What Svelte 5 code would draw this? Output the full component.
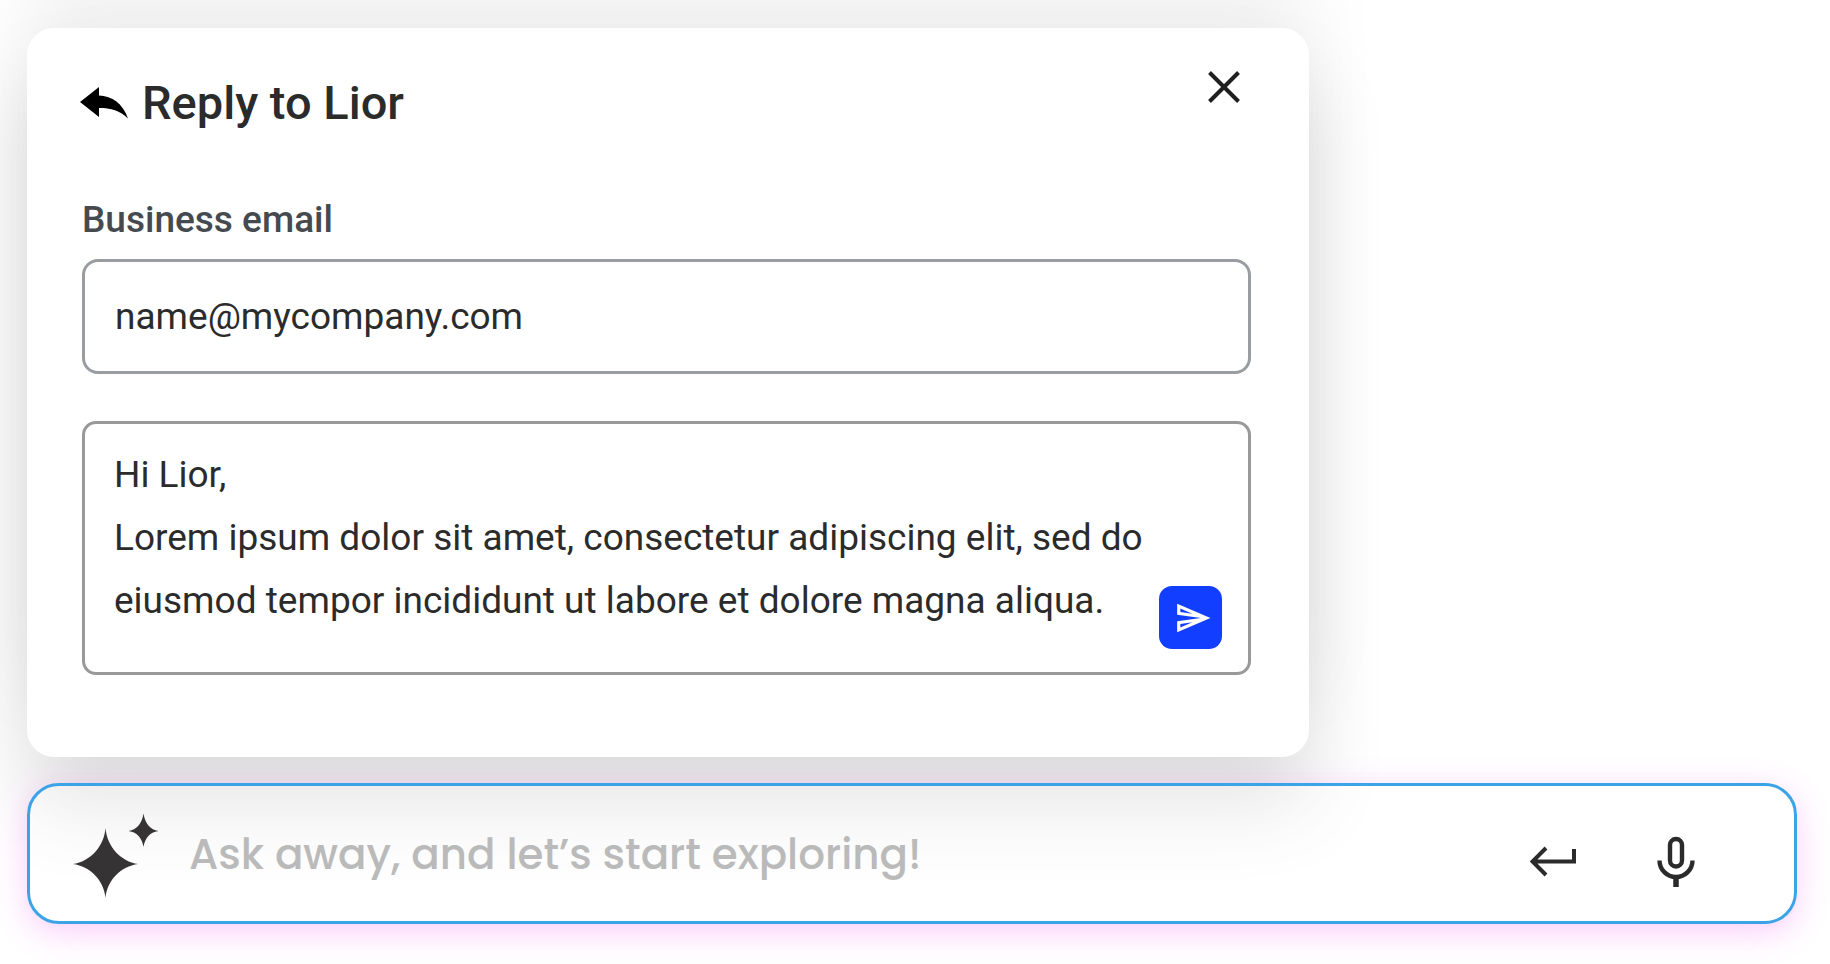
<script>
  let open = $state(true);
  let email = $state('name@mycompany.com');
  let message = $state(
    'Hi Lior,\nLorem ipsum dolor sit amet, consectetur adipiscing elit, sed do eiusmod tempor incididunt ut labore et dolore magna aliqua.'
  );
  let prompt = $state('');

  function send(e) {
    e.preventDefault();
    message = '';
  }

  function ask(e) {
    e.preventDefault();
    prompt = '';
  }
</script>

<main class="page">
  {#if open}
    <form class="reply" onsubmit={send}>
      <header class="reply-header">
        <svg class="reply-icon" viewBox="2 0 46 32" aria-hidden="true">
          <path d="M0 15 L19 0 V8.500 C32 9 43 16.500 48 31.500 C40 23.500 31 21 19 21 V30 Z" />
        </svg>
        <h1>Reply to Lior</h1>
        <button type="button" class="close" aria-label="Close" onclick={() => (open = false)}>
          <svg viewBox="0 0 32 32" aria-hidden="true">
            <path d="M1.500 1.500 L30.500 30.500 M30.500 1.500 L1.500 30.500" />
          </svg>
        </button>
      </header>

      <label for="email">Business email</label>
      <input id="email" type="email" bind:value={email} />

      <div class="message">
        <textarea rows="3" aria-label="Message" bind:value={message}></textarea>
        <button type="submit" class="send" aria-label="Send">
          <svg viewBox="0 0 24 24" aria-hidden="true">
            <path
              d="M4.010 6.030l7.510 3.220-7.520-1 .01-2.220m7.500 8.720L4 17.970v-2.220l7.510-1M2.010 3L2 10l15 2-15 2 .01 7L23 12 2.010 3z"
            />
          </svg>
        </button>
      </div>
    </form>
  {/if}

  <form class="ask" onsubmit={ask}>
    <svg class="sparkles" viewBox="0 0 92 88" aria-hidden="true">
      <path d="M36.500 16 C38 35 52 49.500 69 52 C52 54.500 38 68 36.500 86 C35 68 21 54.500 4 52 C21 49.500 35 35 36.500 16 Z" />
      <path d="M74.500 1.500 C76 11 80.500 17.500 89.500 19 C80.500 20.500 76 26 74.500 35 C73 26 68.500 20.500 59.500 19 C68.500 17.500 73 11 74.500 1.500 Z" />
    </svg>
    <input
      type="text"
      aria-label="Ask a question"
      placeholder="Ask away, and let’s start exploring!"
      bind:value={prompt}
    />
    <div class="actions">
      <button type="submit" aria-label="Enter">
        <svg width="46" height="52" viewBox="0 0 46 52" aria-hidden="true">
          <path d="M16 12 L2.500 25.500 L16 39 M2.500 25.500 H44 V13" stroke-width="4" />
        </svg>
      </button>
      <button type="button" aria-label="Voice input">
        <svg width="38" height="52" viewBox="0 0 38 52" aria-hidden="true">
          <rect x="13" y="3" width="12" height="27.500" rx="6" stroke-width="4.400" />
          <path d="M2.500 24.500 a16.500 16.500 0 0 0 33 0" stroke-width="4.400" />
          <path d="M19 41 V51" stroke-width="5.500" />
        </svg>
      </button>
    </div>
  </form>
</main>

<style>
  :global(body) {
    margin: 0;
    background: #fff;
  }

  .page {
    display: flex;
    flex-direction: column;
    gap: 26px;
    padding: 28px 33px 40px 27px;
    font-family: Roboto, 'Liberation Sans', sans-serif;
    color: #2b2b2b;
  }

  button {
    display: flex;
    align-items: center;
    justify-content: center;
    padding: 0;
    border: none;
    background: none;
    cursor: pointer;
  }

  input,
  textarea {
    box-sizing: border-box;
    width: 100%;
    margin: 0;
    font: inherit;
    color: inherit;
    outline: none;
  }

  .reply {
    box-sizing: border-box;
    width: 100%;
    max-width: 1282px;
    padding: 43px 58px 82px 55px;
    background: #fff;
    border-radius: 27px;
    box-shadow:
      0 50px 80px rgba(0, 0, 0, 0.14),
      0 -60px 80px rgba(0, 0, 0, 0.06);
    font-size: 37px;
  }

  .reply-header {
    display: flex;
    align-items: flex-start;
    gap: 14px;
    margin-bottom: 64px;
  }

  .reply-icon {
    flex: none;
    align-self: center;
    width: 46px;
    height: 32px;
    overflow: visible;
    fill: #000;
  }

  h1 {
    flex: 1;
    margin: 0;
    font-size: 47px;
    font-weight: 500;
    line-height: 64px;
  }

  .close {
    width: 32px;
    height: 32px;
    margin-right: 11px;
  }

  .close svg {
    width: 32px;
    height: 32px;
    fill: none;
    stroke: #1f1f1f;
    stroke-width: 4;
  }

  label {
    display: block;
    margin-bottom: 18px;
    color: #454a50;
    font-weight: 500;
    line-height: 42px;
  }

  #email {
    display: block;
    height: 115px;
    padding: 0 30px;
    border: 3px solid #999ca0;
    border-radius: 16px;
    background: #fff;
  }

  .message {
    position: relative;
    margin-top: 47px;
  }

  textarea {
    display: block;
    padding: 19px 90px 40px 29px;
    border: 3px solid #999;
    border-radius: 14px;
    background: #fff;
    line-height: 63px;
    resize: none;
    overflow: hidden;
  }

  .send {
    position: absolute;
    right: 29px;
    bottom: 26px;
    width: 63px;
    height: 63px;
    padding-left: 4px;
    border-radius: 13px;
    background: #123fff;
  }

  .send svg {
    width: 38px;
    height: 38px;
    fill: #fff;
  }

  /* slightly see-through, so the card's shadow fades out across the bar */
  .ask {
    display: flex;
    align-items: center;
    gap: 28px;
    box-sizing: border-box;
    min-height: 141px;
    padding: 0 99px 0 39px;
    border: 3px solid #3ba3e6;
    border-radius: 32px;
    background: rgba(255, 255, 255, 0.3);
    box-shadow: 0 8px 32px rgba(240, 80, 240, 0.28);
  }

  .sparkles {
    flex: none;
    width: 92px;
    height: 88px;
    padding-top: 5px;
    fill: #353334;
  }

  .ask input {
    flex: 1;
    min-width: 0;
    height: 80px;
    padding: 2px 0 0;
    border: none;
    background: none;
    font-family: Poppins, Inter, sans-serif;
    font-size: 42px;
    font-weight: 500;
  }

  .ask input::placeholder {
    color: #bababa;
    opacity: 1;
  }

  .actions {
    display: flex;
    gap: 81px;
    padding-top: 16px;
  }

  .actions svg {
    fill: none;
    stroke: #2b2b2b;
  }
</style>
